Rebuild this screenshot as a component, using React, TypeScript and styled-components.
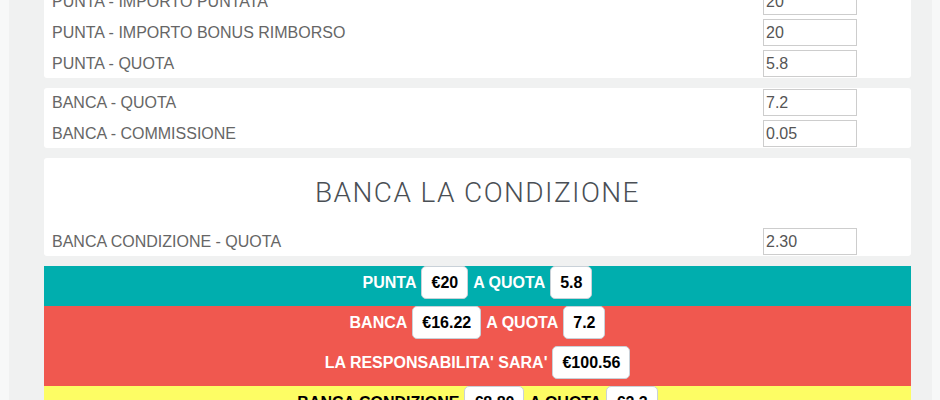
import React from 'react';
import styled, { createGlobalStyle } from 'styled-components';

const GlobalStyle = createGlobalStyle`
	html, body {
		margin: 0;
		padding: 0;
		background-color: #f7f8f8;
		font-family: 'Liberation Sans', Arial, sans-serif;
	}
`;

interface IField {
	label: string;
	value: string;
}

const puntaFields: Array<IField> = [
	{ label: 'PUNTA - IMPORTO PUNTATA', value: '20' },
	{ label: 'PUNTA - IMPORTO BONUS RIMBORSO', value: '20' },
	{ label: 'PUNTA - QUOTA', value: '5.8' }
];

const bancaFields: Array<IField> = [
	{ label: 'BANCA - QUOTA', value: '7.2' },
	{ label: 'BANCA - COMMISSIONE', value: '0.05' }
];

// a result line is a list of plain words and boxed values
type Part = { text: string; boxed?: boolean };

const Field = ({ field }: { field: IField }) => (
	<Row>
		<Label>{field.label}</Label>
		<Input defaultValue={field.value} />
	</Row>
);

const ResultLine = ({ parts }: { parts: Array<Part> }) => (
	<Line>
		{parts.map((p, i) =>
			p.boxed ? <Badge key={i}>{p.text}</Badge> : <span key={i}>{p.text}</span>
		)}
	</Line>
);

function App() {
	return (
		<>
			<GlobalStyle />
			<Page>
				<Column>
					<Card>
						{puntaFields.map((f, i) => (
							<Field key={i} field={f} />
						))}
					</Card>
					<Card>
						{bancaFields.map((f, i) => (
							<Field key={i} field={f} />
						))}
					</Card>
					<Card>
						<Heading>BANCA LA CONDIZIONE</Heading>
						<Field field={{ label: 'BANCA CONDIZIONE - QUOTA', value: '2.30' }} />
					</Card>
					<Results>
						<Bar tone="punta">
							<ResultLine
								parts={[
									{ text: 'PUNTA' },
									{ text: '€20', boxed: true },
									{ text: 'A QUOTA' },
									{ text: '5.8', boxed: true }
								]}
							/>
						</Bar>
						<Bar tone="banca">
							<ResultLine
								parts={[
									{ text: 'BANCA' },
									{ text: '€16.22', boxed: true },
									{ text: 'A QUOTA' },
									{ text: '7.2', boxed: true }
								]}
							/>
							<ResultLine
								parts={[
									{ text: "LA RESPONSABILITA' SARA'" },
									{ text: '€100.56', boxed: true }
								]}
							/>
						</Bar>
						<Bar tone="condizione">
							<ResultLine
								parts={[
									{ text: 'BANCA CONDIZIONE' },
									{ text: '€8.80', boxed: true },
									{ text: 'A QUOTA' },
									{ text: '€2.3', boxed: true }
								]}
							/>
						</Bar>
					</Results>
				</Column>
			</Page>
		</>
	);
}

export default App;

const Page = styled.div`
	background-color: #f0f1f1;
	margin: 0 8px 0 9px;
	min-height: 100vh;
	overflow: hidden;
`;

// the page is scrolled a little: the first card starts above the window
const Column = styled.div`
	display: flex;
	flex-direction: column;
	gap: 10px;
	margin-top: -13px;
	padding: 0 21px 0 35px;
`;

const Card = styled.div`
	background-color: white;
	border-radius: 3px;
	padding: 1px 0 1px 0;
	display: flex;
	flex-direction: column;
	gap: 4px;
`;

const Row = styled.div`
	display: flex;
	align-items: center;
	height: 27px;
`;

const Label = styled.span`
	flex: 1;
	padding-left: 8px;
	font-size: 16px;
	color: #666666;
`;

const Input = styled.input`
	box-sizing: border-box;
	width: 94px;
	height: 27px;
	margin-right: 54px;
	padding: 0 2px;
	border: 1px solid #cdcdcd;
	font-family: 'Liberation Sans', Arial, sans-serif;
	font-size: 16px;
	color: #555555;
	background: white;

	:focus {
		outline: 0;
	}
`;

const Heading = styled.h2`
	margin: 0;
	padding: 20px 0 17px;
	text-align: center;
	font-family: Roboto, 'Liberation Sans', sans-serif;
	font-weight: 300;
	font-size: 28px;
	line-height: 28px;
	letter-spacing: 1.4px;
	color: #4a4f55;
`;

const Results = styled.div`
	display: flex;
	flex-direction: column;
`;

interface BarProps {
	tone: 'punta' | 'banca' | 'condizione';
}

const barColors = {
	punta: { bg: '#00aeae', fg: 'white' },
	banca: { bg: '#f0584f', fg: 'white' },
	condizione: { bg: '#fdfd64', fg: 'black' }
};

const Bar = styled.div<BarProps>`
	background-color: ${({ tone }) => barColors[tone].bg};
	color: ${({ tone }) => barColors[tone].fg};
	display: flex;
	flex-direction: column;
`;

const Line = styled.div`
	display: flex;
	justify-content: center;
	align-items: center;
	gap: 5px;
	height: 40px;
	padding-bottom: 7px;
	box-sizing: border-box;
	font-size: 16px;
	font-weight: bold;
`;

const Badge = styled.span`
	background-color: white;
	color: black;
	border: 1px solid #c9d1d8;
	border-radius: 5px;
	padding: 6px 9px;
	line-height: 19px;
`;
